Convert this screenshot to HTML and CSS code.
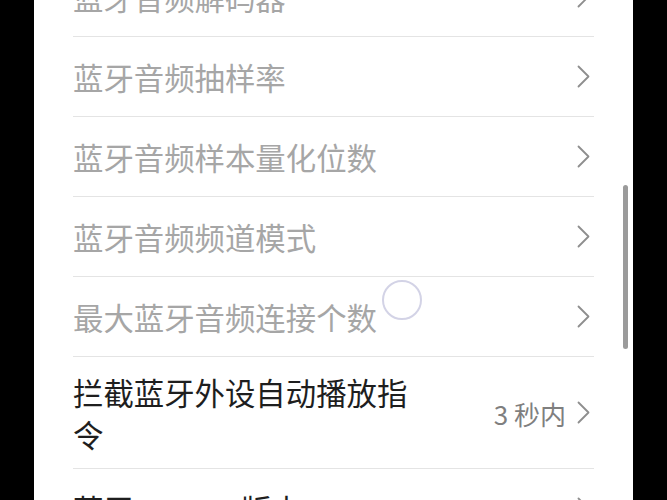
FILE: index.html
```html
<!DOCTYPE html>
<html lang="zh-CN">
<head>
<meta charset="utf-8">
<link rel="stylesheet" href="styles.css">
</head>
<body>
<div class="panel">
  <ul class="list">
    <li class="row disabled"><span class="label">蓝牙音频解码器</span><svg class="chev" viewBox="0 0 13 23"><polyline points="1.5,1.5 11.5,11.5 1.5,21.5"/></svg></li>
    <li class="row disabled"><span class="label">蓝牙音频抽样率</span><svg class="chev" viewBox="0 0 13 23"><polyline points="1.5,1.5 11.5,11.5 1.5,21.5"/></svg></li>
    <li class="row disabled"><span class="label">蓝牙音频样本量化位数</span><svg class="chev" viewBox="0 0 13 23"><polyline points="1.5,1.5 11.5,11.5 1.5,21.5"/></svg></li>
    <li class="row disabled"><span class="label">蓝牙音频频道模式</span><svg class="chev" viewBox="0 0 13 23"><polyline points="1.5,1.5 11.5,11.5 1.5,21.5"/></svg></li>
    <li class="row disabled"><span class="label">最大蓝牙音频连接个数</span><svg class="chev" viewBox="0 0 13 23"><polyline points="1.5,1.5 11.5,11.5 1.5,21.5"/></svg></li>
    <li class="row tall"><span class="label wrap">拦截蓝牙外设自动播放指令</span><span class="value">3 秒内</span><svg class="chev" viewBox="0 0 13 23"><polyline points="1.5,1.5 11.5,11.5 1.5,21.5"/></svg></li>
    <li class="row"><span class="label">蓝牙 AVRCP 版本</span><svg class="chev" viewBox="0 0 13 23"><polyline points="1.5,1.5 11.5,11.5 1.5,21.5"/></svg></li>
  </ul>
  <div class="scrollbar"></div>
  <div class="spinner"></div>
</div>
</body>
</html>
```
FILE: styles.css
```css
html, body {
  margin: 0;
  padding: 0;
  background: #000;
}
body {
  width: 667px;
  height: 500px;
  overflow: hidden;
  font-family: "Noto Sans CJK SC", "Noto Sans", sans-serif;
}
.panel {
  position: relative;
  margin-left: 34px;
  width: 599px;
  height: 500px;
  background: #fff;
  overflow: hidden;
}
.list {
  list-style: none;
  margin: -43px 0 0 0;
  padding: 0 39px;
}
.row {
  box-sizing: border-box;
  height: 80px;
  display: flex;
  align-items: center;
  border-bottom: 1px solid #e4e4e4;
  font-size: 30.4px;
  line-height: 42px;
  color: #1e1e1e;
}
.row.tall {
  height: 112px;
}
.row.disabled {
  color: #a6a6a6;
}
.label {
  flex: 1;
  padding-top: 1px;
}
.label.wrap {
  flex: 0 0 340px;
  margin-right: auto;
}
.value {
  margin-left: auto;
  font-size: 26px;
  color: #7f7f7f;
  padding-right: 11px;
  padding-top: 2px;
}
.chev {
  flex: 0 0 auto;
  width: 13px;
  height: 23px;
  margin-right: 4px;
  fill: none;
  stroke: #8e8e8e;
  stroke-width: 1.8;
  stroke-linecap: round;
  stroke-linejoin: round;
}
.scrollbar {
  position: absolute;
  left: 589px;
  top: 185px;
  width: 5px;
  height: 164px;
  border-radius: 3px;
  background: #9b9b9b;
}
.spinner {
  position: absolute;
  left: 348px;
  top: 280px;
  width: 36px;
  height: 36px;
  border: 2px solid #d3d3e6;
  border-radius: 50%;
}
```
